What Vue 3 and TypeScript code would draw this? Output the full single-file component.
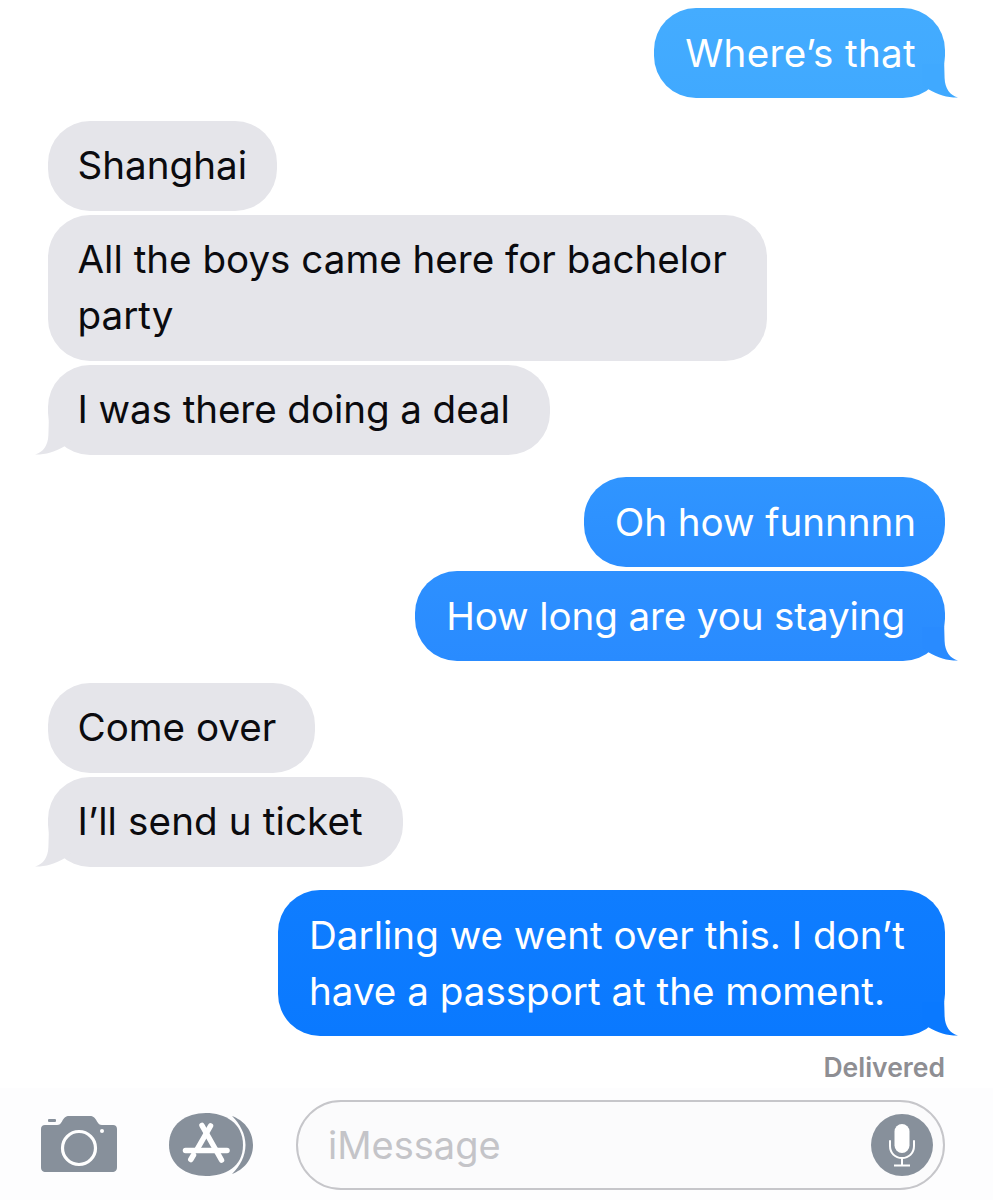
<script setup lang="ts">
interface Msg { text: string[]; out: boolean; tail?: boolean; gap: number; pad: number; track?: number; shade?: [string, string] }
const messages: Msg[] = [
  { text: ['Where’s that'], out: true, tail: true, gap: 0, pad: 29, track: 0.33, shade: ['#44acff', '#40a9ff'] },
  { text: ['Shanghai'], out: false, gap: 23, pad: 30 },
  { text: ['All the boys came here for bachelor', 'party'], out: false, gap: 4, pad: 40 },
  { text: ['I was there doing a deal'], out: false, tail: true, gap: 4, pad: 40, track: -0.08 },
  { text: ['Oh how funnnnn'], out: true, gap: 22, pad: 29, track: -0.05, shade: ['#3095ff', '#2b8eff'] },
  { text: ['How long are you staying'], out: true, tail: true, gap: 4, pad: 40, track: -0.12, shade: ['#2d90ff', '#298bff'] },
  { text: ['Come over'], out: false, gap: 22, pad: 39 },
  { text: ['I’ll send u ticket'], out: false, tail: true, gap: 4, pad: 40, track: 0.12 },
  { text: ['Darling we went over this. I don’t', 'have a passport at the moment.'], out: true, tail: true, gap: 23, pad: 40, shade: ['#0f7dff', '#0a79ff'] },
]

function bubbleStyle(m: Msg): Record<string, string> {
  const style: Record<string, string> = {
    marginTop: `${m.gap}px`,
    paddingRight: `${m.pad}px`,
    letterSpacing: `${m.track ?? 0}px`,
  }
  if (m.shade) style.backgroundImage = `linear-gradient(${m.shade[0]}, ${m.shade[1]})`
  return style
}
</script>

<template>
  <div class="screen">
    <div class="thread">
      <div
        v-for="(m, i) in messages"
        :key="i"
        class="bubble"
        :class="m.out ? 'out' : 'in'"
        :style="bubbleStyle(m)"
      >
        <div v-for="(line, j) in m.text" :key="j" class="line">{{ line }}</div>
        <div v-if="m.tail" class="tail" :style="m.shade ? { background: m.shade[1] } : undefined"></div>
      </div>
      <div class="status">Delivered</div>
    </div>
    <div class="bar">
      <svg class="camera" viewBox="0 0 76 58" width="76" height="58">
        <rect x="7" y="4" width="8" height="3" rx="1" fill="#87909b" />
        <path d="M4 10H16C18.500 10 19.500 9 21 6.500C23 2.500 25 1 28 1H49C52 1 54 2.500 56 6.500C57.500 9 58.500 10 61 10H72C74.500 10 76 11.500 76 14V52C76 55.500 74.500 57 71 57H5C1.500 57 0 55.500 0 52V14C0 11.500 1.500 10 4 10Z" fill="#87909b" />
        <circle cx="38" cy="33" r="16.500" fill="none" stroke="#fff" stroke-width="3.200" />
        <circle cx="61" cy="16" r="2" fill="#fff" />
      </svg>
      <svg class="store" viewBox="0 0 84 64" width="84" height="64">
        <path d="M63 3C74 7 84 17 84 32C84 47 74 57 63 61C71 53 76.500 43 76.500 32C76.500 21 71 11 63 3Z" fill="#87909b" />
        <path d="M37 0C56 0 74 10 74 32C74 54 56 63 37 63C17 63 0 52 0 32C0 11 17 0 37 0Z" fill="#87909b" />
        <g fill="none" stroke="#fff" stroke-linecap="round" stroke-width="5.500">
          <path d="M33 12.500L52.500 47" />
          <path d="M41.500 13L28 36.500" />
          <path d="M16.500 37.500H58" />
          <path d="M24.500 42L21.800 46.500" />
        </g>
      </svg>
      <div class="input">
        <span class="placeholder">iMessage</span>
        <span class="mic">
          <svg viewBox="0 0 62 62" width="62" height="62">
            <rect x="23.500" y="10" width="15" height="29" rx="7.500" fill="#fff" />
            <path d="M19 27V32C19 39 24 44 31 44C38 44 43 39 43 32V27" fill="none" stroke="#fff" stroke-width="2" stroke-linecap="round" />
            <path d="M31 44V51M23 51.500H39" fill="none" stroke="#fff" stroke-width="2" />
          </svg>
        </span>
      </div>
    </div>
  </div>
</template>

<style>
html, body { background: #fff; }
</style>

<style scoped>
.screen {
  width: 993px;
  height: 1200px;
  overflow: hidden;
  background: #fff;
  display: flex;
  flex-direction: column;
  font-family: Inter, "Liberation Sans", sans-serif;
}
.thread {
  display: flex;
  flex-direction: column;
  padding: 8px 48px 0;
}
.bubble {
  position: relative;
  padding: 17px 30px 17px 31px;
  border-radius: 42px;
  font-size: 38.600px;
  line-height: 56px;
  white-space: nowrap;
}
.line { height: 56px; }
.in {
  align-self: flex-start;
  background: #e5e5ea;
  color: #0b0b0f;
  padding-left: 29.500px;
  padding-top: 16px;
  padding-bottom: 18px;
}
.out {
  align-self: flex-end;
  color: #fff;
}
.tail {
  position: absolute;
  bottom: 0;
  width: 46px;
  height: 40px;
}
.out .tail {
  right: -13px;
  clip-path: path("M10 6H32.200L32.600 20C33 31 38 37 46 39.600C36 39.800 26 37 16 31L10 26Z");
}
.in .tail {
  left: -13px;
  background: #e5e5ea;
  clip-path: path("M36 6H13.800L13.400 20C13 31 8 37 0 39.600C10 39.800 20 37 30 31L36 26Z");
}
.status {
  align-self: flex-end;
  margin-top: 16px;
  font-size: 26.500px;
  line-height: 30px;
  font-weight: 600;
  color: #8e8e93;
}
.bar {
  display: flex;
  align-items: center;
  padding: 12px 48px 10px 41px;
  margin-top: 6px;
  background: #fdfdfe;
}
.camera { flex: none; margin-top: -2px; }
.store { flex: none; margin-left: 52px; }
.input {
  flex: 1;
  margin-left: 43px;
  height: 90px;
  box-sizing: border-box;
  border: 2px solid #c6c6ca;
  border-radius: 45px;
  background: #fbfbfc;
  display: flex;
  align-items: center;
  justify-content: space-between;
  padding: 0 10px 0 30px;
}
.placeholder {
  font-size: 38px;
  color: #c4c4c8;
}
.mic {
  width: 62px;
  height: 62px;
  border-radius: 50%;
  background: #87909b;
  display: block;
}
.mic svg { display: block; }
</style>
